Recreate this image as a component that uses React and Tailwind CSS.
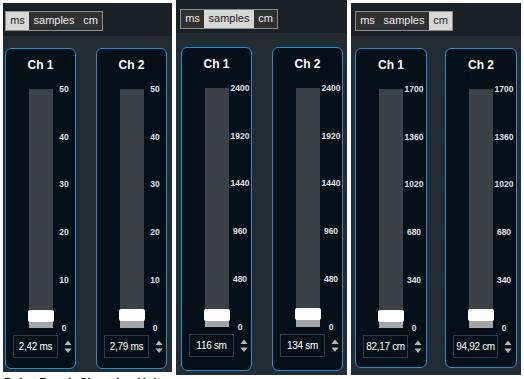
import React from "react"

const TRACK_H = 239

const PANELS = [
  {
    unit: "ms",
    max: 50,
    ticks: ["50", "40", "30", "20", "10", "0"],
    wrap: "ml-[3px] mt-[3px] w-[169px] h-[369px]",
    head: "h-[33px] pl-[2px] pt-[4px]",
    body: "pl-[2px] pt-[12px] gap-[20px]",
    card: "w-[71px] h-[321px]",
    channels: [
      { name: "Ch 1", value: 2.42, text: "2,42 ms" },
      { name: "Ch 2", value: 2.79, text: "2,79 ms" },
    ],
  },
  {
    unit: "samples",
    max: 2400,
    ticks: ["2400", "1920", "1440", "960", "480", "0"],
    wrap: "ml-[4px] mt-0 w-[171px] h-[375px]",
    head: "h-[33px] pl-[4px] pt-[5px]",
    body: "pl-[5px] pt-[14px] gap-[20px]",
    card: "w-[71px] h-[324px]",
    channels: [
      { name: "Ch 1", value: 116, text: "116 sm" },
      { name: "Ch 2", value: 134, text: "134 sm" },
    ],
  },
  {
    unit: "cm",
    max: 1700,
    ticks: ["1700", "1360", "1020", "680", "340", "0"],
    wrap: "ml-[4px] mt-[3px] w-[170px] h-[372px]",
    head: "h-[33px] pl-[4px] pt-[4px]",
    body: "pl-[4px] pt-[12px] gap-[18px]",
    card: "w-[72px] h-[320px]",
    channels: [
      { name: "Ch 1", value: 82.17, text: "82,17 cm" },
      { name: "Ch 2", value: 94.92, text: "94,92 cm" },
    ],
  },
]

function UnitSwitch({ active }) {
  const seg = (key, label, w) => (
    <div
      className={`${w} h-[18px] flex items-center justify-center text-[11px] leading-none ${
        active === key ? "bg-[#d7d7d7] text-[#1c1c1c]" : "bg-[#303030] text-[#eeeeee]"
      }`}
    >
      {label}
    </div>
  )
  return (
    <div className="inline-flex border border-[#8c8c8c] bg-[#303030]">
      {seg("ms", "ms", "w-[23px]")}
      {seg("samples", "samples", "w-[50px]")}
      {seg("cm", "cm", "w-[23px]")}
    </div>
  )
}

function Spinner() {
  return (
    <svg width="8" height="14" viewBox="0 0 8 14" className="ml-[6px]">
      <path d="M4 0.5 L7.5 5 L0.5 5 Z" fill="#b4b8bc" />
      <path d="M0.5 8.5 L7.5 8.5 L4 13 Z" fill="#b4b8bc" />
    </svg>
  )
}

function Channel({ ch, max, ticks, card }) {
  const pos = (ch.value / max) * TRACK_H
  return (
    <div className={`${card} flex flex-col rounded-[6px] border border-[#1b8fd6] bg-[#050f17]`}>
      <div className="pt-[9px] text-center text-[12px] font-bold leading-[14px] text-white">{ch.name}</div>
      <div className="mt-[17px] flex pl-[23px]">
        <div className="relative h-[239px] w-[24px] bg-[#3a4248]">
          {/* filled part below the thumb */}
          <div className="absolute bottom-0 left-0 right-0 bg-[#a3a5a7]" style={{ height: pos }} />
          <div
            className="absolute left-[-1px] h-[12px] w-[26px] rounded-[2px] bg-white"
            style={{ bottom: pos - 6 }}
          />
        </div>
        <div className="flex h-[239px] w-[22px] flex-col justify-between">
          {ticks.map((t) => (
            <div key={t} className="flex h-0 items-center justify-center">
              <span className="text-[8.5px] font-bold leading-none text-[#e2e2e8]">{t}</span>
            </div>
          ))}
        </div>
      </div>
      <div className="mt-[7px] flex items-center pl-[7px]">
        <div className="flex h-[23px] w-[45px] items-center justify-center border border-[#2c3b4a] bg-[#050f17] text-[10px] tracking-[-0.3px] text-white">
          {ch.text}
        </div>
        <Spinner />
      </div>
    </div>
  )
}

function Panel({ p }) {
  return (
    <div className={`${p.wrap} flex flex-col bg-[#232b33]`}>
      <div className={`${p.head} bg-[#1a2026]`}>
        <UnitSwitch active={p.unit} />
      </div>
      <div className={`flex ${p.body}`}>
        {p.channels.map((ch) => (
          <Channel key={ch.name} ch={ch} max={p.max} ticks={p.ticks} card={p.card} />
        ))}
      </div>
    </div>
  )
}

export default function App() {
  return (
    <div className="h-[379px] w-[524px] overflow-hidden bg-white font-['Liberation_Sans',Arial,sans-serif]">
      <div className="flex items-start">
        {PANELS.map((p) => (
          <Panel key={p.unit} p={p} />
        ))}
      </div>
      <div className="mt-[2px] pl-[4px] text-[12px] font-bold leading-none text-black">Delay Panel: Changing Units</div>
    </div>
  )
}
